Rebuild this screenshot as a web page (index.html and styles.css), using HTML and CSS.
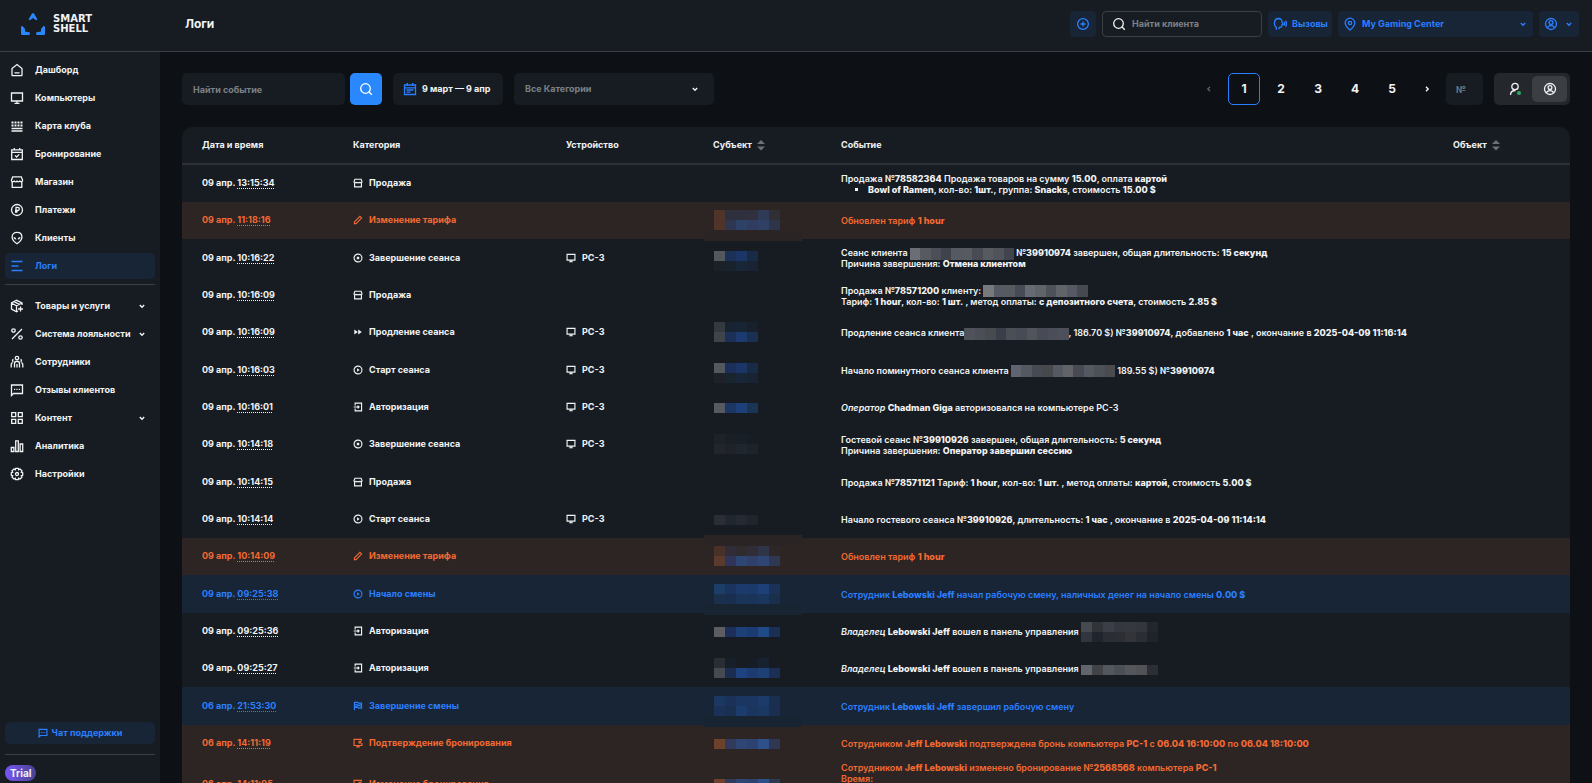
FILE: index.html
```html
<!DOCTYPE html>
<html lang="ru">
<head>
    <meta charset="UTF-8">
    <meta name="viewport" content="width=device-width, initial-scale=1.0">
    <title>Логи</title>
    <link rel="stylesheet" href="styles.css">
</head>
<body>

    <!-- Общие иконки -->
    <svg class="sprite" aria-hidden="true">
        <symbol id="i-home" viewBox="0 0 14 14"><path d="M2 5.6 7 1.6l5 4V12a.6.6 0 0 1-.6.6H2.6A.6.6 0 0 1 2 12zM4.5 9.8h5"/></symbol>
        <symbol id="i-pc" viewBox="0 0 14 14"><path d="M1.5 2h11v8h-11zM7 10v2M4.5 12.3h5"/></symbol>
        <symbol id="i-map" viewBox="0 0 14 14"><path d="M1.500 3.500h11M1.500 6.500h11" stroke-width="1.800" stroke-dasharray="2 1"/><path d="M1.500 9.500h11M1.500 12h11"/></symbol>
        <symbol id="i-booking" viewBox="0 0 14 14"><path d="M1.7 2.8h10.6v9.7H1.7zM1.7 5.3h10.6M4.3 1v2.5M9.7 1v2.5M5 8.4l1.6 1.6 2.6-2.6"/></symbol>
        <symbol id="i-shop" viewBox="0 0 14 14"><path d="M2.7 1.8h8.6l1.3 3.4c0 2-2.6 2-2.8.3-.2 1.7-2.7 1.7-2.8 0-.1 1.700-2.600 1.700-2.800 0C4 7.200 1.400 7.200 1.400 5.200zM2.200 7v5.400h9.600V7"/></symbol>
        <symbol id="i-pay" viewBox="0 0 14 14"><circle cx="7" cy="7" r="5.5"/><path d="M6 10V4.300h1.700a1.500 1.500 0 0 1 0 3.200H5M5 8.800h2.600"/></symbol>
        <symbol id="i-alien" viewBox="0 0 14 14"><path d="M7 1.300c-3 0-4.900 1.900-4.900 4.700 0 3 2.500 5.200 4.900 6.700 2.400-1.500 4.900-3.700 4.900-6.700C11.900 3.200 10 1.300 7 1.300z"/><path d="M3.600 6c1.700 0 2.700 1 2.700 2.500C4.500 8.600 3.600 7.600 3.600 6zM10.400 6c-1.700 0-2.700 1-2.700 2.500 1.800.1 2.700-.9 2.700-2.500z" fill="currentColor" stroke="none"/></symbol>
        <symbol id="i-logs" viewBox="0 0 14 14"><path d="M1.500 2.500h11M1.500 7h7M1.500 11.500h11"/></symbol>
        <symbol id="i-box" viewBox="0 0 14 14"><path d="M12 6V4L6.500 1.300 1.500 4v6l5 2.700 1.500-.7M1.500 4l5 2.700L12 4M6.500 6.700v6M4 2.600l5.200 2.700M10.500 7.500v5M8 10h5"/></symbol>
        <symbol id="i-percent" viewBox="0 0 14 14"><path d="M12 2 2 12"/><circle cx="3.500" cy="3.500" r="1.700"/><circle cx="10.500" cy="10.500" r="1.700"/></symbol>
        <symbol id="i-staff" viewBox="0 0 14 14"><circle cx="7" cy="3" r="1.700"/><path d="M4.500 12.500V8.500C4.500 5.500 9.500 5.500 9.500 8.500v4M7 9v3.500M3.500 4.500a1 1 0 1 0 0 2M1.200 12.500V9.500c0-1 .6-1.600 1.500-1.800M10.500 4.500a1 1 0 1 1 0 2M12.800 12.500V9.500c0-1-.6-1.600-1.500-1.800"/></symbol>
        <symbol id="i-chat" viewBox="0 0 14 14"><path d="M1.500 2h11v8.500h-9l-2 2zM4 6.300h1.200M6.400 6.300h1.200M8.800 6.300H10"/></symbol>
        <symbol id="i-grid" viewBox="0 0 14 14"><path d="M1.700 1.700h4v4h-4zM8.300 1.700h4v4h-4zM1.700 8.300h4v4h-4zM8.300 8.300h4v4h-4z"/></symbol>
        <symbol id="i-chart" viewBox="0 0 14 14"><path d="M1.300 8.500h2.600v4H1.300zM5.700 1.800h2.600v10.700H5.700zM10.100 5h2.600v7.500h-2.600z"/></symbol>
        <symbol id="i-gear" viewBox="0 0 14 14"><path d="M5.700 1.300h2.600l.4 1.400 1.400-.7L12 3.900l-.7 1.400 1.400.4v2.600l-1.400.4.700 1.400-1.900 1.900-1.400-.7-.4 1.400H5.700l-.4-1.400-1.400.7L2 10.100l.7-1.400-1.400-.4V5.700l1.400-.4L2 3.900 3.900 2l1.400.7z"/><circle cx="7" cy="7" r="1.500"/></symbol>
        <symbol id="i-down" viewBox="0 0 10 10"><path d="M2.800 4 5 6.200 7.200 4"/></symbol>
        <symbol id="i-search" viewBox="0 0 14 14"><circle cx="6.500" cy="6.500" r="4.800"/><path d="m10 10 2.800 2.800"/></symbol>
        <symbol id="i-plus" viewBox="0 0 14 14"><circle cx="7" cy="7" r="5.400"/><path d="M7 4.500v5M4.500 7h5"/></symbol>
        <symbol id="i-call" viewBox="0 0 14 14"><path d="M3.300 12.700v-2.500C.5 8.500.6 1.800 5.300 1.500c3 0 3.800 2 3.700 3.500l1 2.200-1 .5c.1 2-.7 2.500-2.200 2.500l-1.300 2M11 4.700c.7 1.300.7 2.800 0 4M12.700 3.700c1 2 1 4 0 6"/></symbol>
        <symbol id="i-pin" viewBox="0 0 14 14"><path d="M7 13C4 10.500 2.200 8.500 2.200 6a4.800 4.800 0 0 1 9.600 0c0 2.500-1.800 4.500-4.800 7z"/><circle cx="7" cy="6" r="1.700"/></symbol>
        <symbol id="i-user" viewBox="0 0 14 14"><circle cx="7" cy="7" r="5.500"/><circle cx="7" cy="5.500" r="1.900"/><path d="M3.500 11c.5-3.200 6.500-3.200 7 0"/></symbol>
        <symbol id="i-calendar" viewBox="0 0 14 14"><path d="M1.500 3h11v9.500h-11zM1.500 5.800h11M4.300 1v3M9.700 1v3M3.500 8h7M3.500 10.200h4"/></symbol>
        <symbol id="i-play" viewBox="0 0 14 14"><circle cx="7" cy="7" r="5.500"/><path d="M5.700 4.700 9.300 7 5.700 9.300z" fill="currentColor" stroke="none"/></symbol>
        <symbol id="i-stop" viewBox="0 0 14 14"><circle cx="7" cy="7" r="5.500"/><path d="M5.300 5.300h3.400v3.400H5.300z" fill="currentColor" stroke="none"/></symbol>
        <symbol id="i-forward" viewBox="0 0 14 14"><path d="M1.800 3.500 6.800 7l-5 3.500zM7.300 3.500l5 3.500-5 3.500z" fill="currentColor" stroke="none"/></symbol>
        <symbol id="i-login" viewBox="0 0 14 14"><path d="M3 4.800V1.500h9v11H3V9.200M1 7h7.500M6.500 5l2 2-2 2"/></symbol>
        <symbol id="i-edit" viewBox="0 0 14 14"><path d="M2 12v-2.300l7.700-7.700L12 4.300 4.300 12z"/></symbol>
        <symbol id="i-flag" viewBox="0 0 14 14"><path d="M2 13V2h4.500l1 1H12v7H8L7 9H2M3 4.500l9 3M3 7.500 12 5"/></symbol>
        <symbol id="i-reserve" viewBox="0 0 14 14"><path d="M12.500 7v3.500h-11V2h11M7 10.500v2M4.500 12.500h5M8.500 7l3.500-3.500M8.500 4v3h3"/></symbol>
        <symbol id="i-sort" viewBox="0 0 8 12"><path d="M0 5 4 1l4 4zM0 7.500 4 11.500l4-4z" fill="currentColor" stroke="none"/></symbol>
    </svg>

    <header class="header">
        <a href="#" class="logo" aria-label="Smart Shell">
            <svg class="logo-mark" viewBox="0 0 24 22"><path d="M7.500 6.500 11 .5q1-1 2 0l3.500 6-1.500.8-3-2.300-3 2.300zM0 13.500l1.500-.5L4 16v2.500l5 1L8.500 22H1.500Q0 22 0 20.500zM24 13.500l-1.500-.5L20 16v2.500l-5 1 .5 2.500h7q1.500 0 1.500-1.500z"/></svg>
            <span class="logo-text">SMART<br>SHELL</span>
        </a>
        <h1 class="title">Логи</h1>
        <div class="header-tools">
            <button class="tool tool-add" aria-label="Добавить"><svg class="icon"><use href="#i-plus"/></svg></button>
            <label class="client-search">
                <svg class="icon"><use href="#i-search"/></svg>
                <input type="text" placeholder="Найти клиента" aria-label="Найти клиента">
            </label>
            <button class="tool tool-calls"><svg class="icon"><use href="#i-call"/></svg>Вызовы</button>
            <button class="tool tool-center"><svg class="icon"><use href="#i-pin"/></svg>My Gaming Center<svg class="arrow"><use href="#i-down"/></svg></button>
            <button class="tool tool-user" aria-label="Профиль"><svg class="icon"><use href="#i-user"/></svg><svg class="arrow"><use href="#i-down"/></svg></button>
        </div>
    </header>

    <div class="layout">
        <aside class="sidebar">
            <nav class="nav">
                <a href="#"><svg class="icon"><use href="#i-home"/></svg>Дашборд</a>
                <a href="#"><svg class="icon"><use href="#i-pc"/></svg>Компьютеры</a>
                <a href="#"><svg class="icon"><use href="#i-map"/></svg>Карта клуба</a>
                <a href="#"><svg class="icon"><use href="#i-booking"/></svg>Бронирование</a>
                <a href="#"><svg class="icon"><use href="#i-shop"/></svg>Магазин</a>
                <a href="#"><svg class="icon"><use href="#i-pay"/></svg>Платежи</a>
                <a href="#"><svg class="icon"><use href="#i-alien"/></svg>Клиенты</a>
                <a href="#" class="active"><svg class="icon"><use href="#i-logs"/></svg>Логи</a>
            </nav>
            <nav class="nav nav-more">
                <a href="#"><svg class="icon"><use href="#i-box"/></svg>Товары и услуги<svg class="arrow"><use href="#i-down"/></svg></a>
                <a href="#"><svg class="icon"><use href="#i-percent"/></svg>Система лояльности<svg class="arrow"><use href="#i-down"/></svg></a>
                <a href="#"><svg class="icon"><use href="#i-staff"/></svg>Сотрудники</a>
                <a href="#"><svg class="icon"><use href="#i-chat"/></svg>Отзывы клиентов</a>
                <a href="#"><svg class="icon"><use href="#i-grid"/></svg>Контент<svg class="arrow"><use href="#i-down"/></svg></a>
                <a href="#"><svg class="icon"><use href="#i-chart"/></svg>Аналитика</a>
                <a href="#"><svg class="icon"><use href="#i-gear"/></svg>Настройки</a>
            </nav>
            <div class="sidebar-bottom">
                <button class="support"><svg class="icon icon-sm"><use href="#i-chat"/></svg>Чат поддержки</button>
                <div class="plan"><span class="badge">Trial</span></div>
            </div>
        </aside>

        <main class="main">
            <div class="toolbar">
                <input type="text" class="field event-search" placeholder="Найти событие" aria-label="Найти событие">
                <button class="search-button" aria-label="Искать"><svg class="icon"><use href="#i-search"/></svg></button>
                <button class="field date-range"><svg class="icon"><use href="#i-calendar"/></svg>9 март — 9 апр</button>
                <div class="select-wrap">
                    <select class="field category-select" aria-label="Категория">
                        <option>Все Категории</option>
                    </select>
                    <svg class="arrow"><use href="#i-down"/></svg>
                </div>

                <div class="pagination">
                    <button class="page-step" aria-label="Назад" disabled><svg class="arrow arrow-prev"><use href="#i-down"/></svg></button>
                    <button class="page current">1</button>
                    <button class="page">2</button>
                    <button class="page">3</button>
                    <button class="page">4</button>
                    <button class="page">5</button>
                    <button class="page-step" aria-label="Вперед"><svg class="arrow arrow-next"><use href="#i-down"/></svg></button>
                    <input type="text" class="field page-number" placeholder="№" aria-label="Номер страницы">
                </div>
                <div class="switch">
                    <button aria-label="Клиенты"><svg class="icon" viewBox="0 0 14 14"><circle cx="7" cy="4.500" r="3.200"/><path d="M2.500 13c0-3 2-4.500 5-4.500"/><circle class="online" cx="11" cy="11" r="2"/></svg></button>
                    <button class="on" aria-label="Сотрудники"><svg class="icon"><use href="#i-user"/></svg></button>
                </div>
            </div>

            <table class="logs">
                <colgroup>
                    <col class="col-date">
                    <col class="col-category">
                    <col class="col-device">
                    <col class="col-subject">
                    <col>
                    <col class="col-object">
                </colgroup>
                <thead>
                    <tr>
                        <th>Дата и время</th>
                        <th>Категория</th>
                        <th>Устройство</th>
                        <th>Субъект<svg class="sort"><use href="#i-sort"/></svg></th>
                        <th>Событие</th>
                        <th>Объект<svg class="sort"><use href="#i-sort"/></svg></th>
                    </tr>
                </thead>
                <tbody>
                    <tr>
                        <td>09 апр. <span class="time">13:15:34</span></td>
                        <td><svg class="icon icon-sm"><use href="#i-shop"/></svg>Продажа</td>
                        <td></td>
                        <td></td>
                        <td class="event">Продажа <b>№78582364</b> Продажа товаров на сумму <b>15.00</b>, оплата <b>картой</b>
                            <ul><li><b>Bowl of Ramen</b>, кол-во: <b>1шт.</b>, группа: <b>Snacks</b>, стоимость <b>15.00 $</b></li></ul></td>
                        <td></td>
                    </tr>
                    <tr class="orange">
                        <td>09 апр. <span class="time">11:18:16</span></td>
                        <td><svg class="icon icon-sm"><use href="#i-edit"/></svg>Изменение тарифа</td>
                        <td></td>
                        <td><span class="mask spill-down" data-cells="#50342a #2f303d #2f303d #30303f #2f3a57 #302f35,#50342a #2e3750 #2e4167 #303d60 #2f4065 #2f3549"></span></td>
                        <td class="event">Обновлен тариф <b>1 hour</b></td>
                        <td></td>
                    </tr>
                    <tr>
                        <td>09 апр. <span class="time">10:16:22</span></td>
                        <td><svg class="icon icon-sm"><use href="#i-stop"/></svg>Завершение сеанса</td>
                        <td><svg class="icon icon-sm"><use href="#i-pc"/></svg>PC-3</td>
                        <td><span class="mask low" data-cells="#53575e #1b3158 #1c3567 #182b45,#1b2127 #18222e #192637 #192333"></span></td>
                        <td class="event">Сеанс клиента <span class="mask name" data-cells="#6b6f75 #575a5e #4c4f57 #3f434b #565a60 #575b61 #484b54 #575b5f #50545a #41444d"></span> <b>№39910974</b> завершен, общая длительность: <b>15 секунд</b><br>Причина завершения: <b>Отмена клиентом</b></td>
                        <td></td>
                    </tr>
                    <tr>
                        <td>09 апр. <span class="time">10:16:09</span></td>
                        <td><svg class="icon icon-sm"><use href="#i-shop"/></svg>Продажа</td>
                        <td></td>
                        <td></td>
                        <td class="event">Продажа <b>№78571200</b> клиенту: <span class="mask name" data-cells="#77797d #565a65 #575a5e #474b55 #666a73 #606469 #4d5159 #606469 #555966 #464950"></span><br>Тариф: <b>1 hour</b>, кол-во: <b>1 шт.</b> , метод оплаты: <b>с депозитного счета</b>, стоимость <b>2.85 $</b></td>
                        <td></td>
                    </tr>
                    <tr>
                        <td>09 апр. <span class="time">10:16:09</span></td>
                        <td><svg class="icon icon-sm"><use href="#i-forward"/></svg>Продление сеанса</td>
                        <td><svg class="icon icon-sm"><use href="#i-pc"/></svg>PC-3</td>
                        <td><span class="mask" data-cells="#34383f #172331 #172433 #18202c,#3f434b #1b3057 #1d3a70 #1a3052"></span></td>
                        <td class="event">Продление сеанса клиента<span class="mask name" data-cells="#4f525a #4b4e56 #474a4e #3a3e48 #4b4e54 #474b55 #51545a #484b54 #4b4e59 #4d505a"></span>, 186.70 $) <b>№39910974</b>, добавлено <b>1 час</b> , окончание в <b>2025-04-09 11:16:14</b></td>
                        <td></td>
                    </tr>
                    <tr>
                        <td>09 апр. <span class="time">10:16:03</span></td>
                        <td><svg class="icon icon-sm"><use href="#i-play"/></svg>Старт сеанса</td>
                        <td><svg class="icon icon-sm"><use href="#i-pc"/></svg>PC-3</td>
                        <td><span class="mask low" data-cells="#53575e #1b2f5a #1c3567 #182b45,#1e2228 #18242e #192637 #192433"></span></td>
                        <td class="event">Начало поминутного сеанса клиента <span class="mask name" data-cells="#606370 #55585f #464b53 #47484c #545962 #626367 #474a53 #545961 #4c5057 #4a4b4f"></span> 189.55 $) <b>№39910974</b></td>
                        <td></td>
                    </tr>
                    <tr>
                        <td>09 апр. <span class="time">10:16:01</span></td>
                        <td><svg class="icon icon-sm"><use href="#i-login"/></svg>Авторизация</td>
                        <td><svg class="icon icon-sm"><use href="#i-pc"/></svg>PC-3</td>
                        <td><span class="mask" data-cells="#575a60 #1d3765 #1e4079 #1c3454"></span></td>
                        <td class="event"><i>Оператор</i> <b>Chadman Giga</b> авторизовался на компьютере PC-3</td>
                        <td></td>
                    </tr>
                    <tr>
                        <td>09 апр. <span class="time">10:14:18</span></td>
                        <td><svg class="icon icon-sm"><use href="#i-stop"/></svg>Завершение сеанса</td>
                        <td><svg class="icon icon-sm"><use href="#i-pc"/></svg>PC-3</td>
                        <td><span class="mask" data-cells="#1d2128 #1a1f26 #191f26 #171d23,#22252c #1f222a #20262d #1e232a"></span></td>
                        <td class="event">Гостевой сеанс <b>№39910926</b> завершен, общая длительность: <b>5 секунд</b><br>Причина завершения: <b>Оператор завершил сессию</b></td>
                        <td></td>
                    </tr>
                    <tr>
                        <td>09 апр. <span class="time">10:14:15</span></td>
                        <td><svg class="icon icon-sm"><use href="#i-shop"/></svg>Продажа</td>
                        <td></td>
                        <td></td>
                        <td class="event">Продажа <b>№78571121</b> Тариф: <b>1 hour</b>, кол-во: <b>1 шт.</b> , метод оплаты: <b>картой</b>, стоимость <b>5.00 $</b></td>
                        <td></td>
                    </tr>
                    <tr>
                        <td>09 апр. <span class="time">10:14:14</span></td>
                        <td><svg class="icon icon-sm"><use href="#i-play"/></svg>Старт сеанса</td>
                        <td><svg class="icon icon-sm"><use href="#i-pc"/></svg>PC-3</td>
                        <td><span class="mask" data-cells="#2a2d35 #20272e #252a32 #20242c"></span></td>
                        <td class="event">Начало гостевого сеанса <b>№39910926</b>, длительность: <b>1 час</b> , окончание в <b>2025-04-09 11:14:14</b></td>
                        <td></td>
                    </tr>
                    <tr class="orange">
                        <td>09 апр. <span class="time">10:14:09</span></td>
                        <td><svg class="icon icon-sm"><use href="#i-edit"/></svg>Изменение тарифа</td>
                        <td></td>
                        <td><span class="mask spill-up" data-cells="#4a3128 #302d38 #302b2d #302d38 #2f3448 #2d2827,#5a3a2c #2e3558 #2e4673 #30406b #2f4675 #2f3853"></span></td>
                        <td class="event">Обновлен тариф <b>1 hour</b></td>
                        <td></td>
                    </tr>
                    <tr class="blue">
                        <td>09 апр. <span class="time">09:25:38</span></td>
                        <td><svg class="icon icon-sm"><use href="#i-play"/></svg>Начало смены</td>
                        <td></td>
                        <td><span class="mask spill-down" data-cells="#1b3d68 #1b335f #1c3a6b #1b3a6a #1d4078 #1b3157,#1a304d #1a2f50 #1a3558 #1a3358 #1b365e #1a2f4c"></span></td>
                        <td class="event">Сотрудник <b>Lebowski Jeff</b> начал рабочую смену, наличных денег на начало смены <b>0.00 $</b></td>
                        <td></td>
                    </tr>
                    <tr>
                        <td>09 апр. <span class="time">09:25:36</span></td>
                        <td><svg class="icon icon-sm"><use href="#i-login"/></svg>Авторизация</td>
                        <td></td>
                        <td><span class="mask" data-cells="#5c5e62 #1b2f5a #1e4079 #1d3b73 #1f4a86 #1b2f54"></span></td>
                        <td class="event"><i>Владелец</i> <b>Lebowski Jeff</b> вошел в панель управления <span class="mask" data-cells="#454a50 #303338 #3b3e46 #34373e #35383e #33363c #23272d,#31353d #20242c #2a2d34 #2b2e34 #323439 #2a2d34 #1f232a"></span></td>
                        <td></td>
                    </tr>
                    <tr>
                        <td>09 апр. <span class="time">09:25:27</span></td>
                        <td><svg class="icon icon-sm"><use href="#i-login"/></svg>Авторизация</td>
                        <td></td>
                        <td><span class="mask" data-cells="#292d34 #17202a #161c22 #171d27 #17212f #161c22,#454951 #1b2e52 #1e4280 #1d3b70 #1e4077 #1b2f54"></span></td>
                        <td class="event"><i>Владелец</i> <b>Lebowski Jeff</b> вошел в панель управления <span class="mask" data-cells="#60666b #414347 #52565d #4a4e56 #54565a #515256 #2b2e35"></span></td>
                        <td></td>
                    </tr>
                    <tr class="blue">
                        <td>06 апр. <span class="time">21:53:30</span></td>
                        <td><svg class="icon icon-sm"><use href="#i-flag"/></svg>Завершение смены</td>
                        <td></td>
                        <td><span class="mask spill-down" data-cells="#1b3863 #1b3157 #1b3660 #1b3660 #1c3b6b #1a2f50,#1b3157 #1a3050 #1c3c6b #1b355f #1b3863 #1a2f50"></span></td>
                        <td class="event">Сотрудник <b>Lebowski Jeff</b> завершил рабочую смену</td>
                        <td></td>
                    </tr>
                    <tr class="orange">
                        <td>06 апр. <span class="time">14:11:19</span></td>
                        <td><svg class="icon icon-sm"><use href="#i-reserve"/></svg>Подтверждение бронирования</td>
                        <td></td>
                        <td><span class="mask" data-cells="#6e412c #2f3a5c #2f4674 #2e4270 #2d4f8a #2f3853"></span></td>
                        <td class="event">Сотрудником <b>Jeff Lebowski</b> подтверждена бронь компьютера <b>PC-1</b> с <b>06.04 16:10:00</b> по <b>06.04 18:10:00</b></td>
                        <td></td>
                    </tr>
                    <tr class="orange">
                        <td>06 апр. <span class="time">14:11:05</span></td>
                        <td><svg class="icon icon-sm"><use href="#i-reserve"/></svg>Изменение бронирования</td>
                        <td></td>
                        <td><span class="mask" data-cells="#6e412c #2f3a5c #2f4674 #2e4270 #2d4f8a #2f3853"></span></td>
                        <td class="event">Сотрудником <b>Jeff Lebowski</b> изменено бронирование <b>№2568568</b> компьютера <b>PC-1</b><br>Время:<br><br><br></td>
                        <td></td>
                    </tr>
                </tbody>
            </table>
        </main>
    </div>

    <script>
        // Рисует мозаику поверх скрытых имен
        document.querySelectorAll(".mask").forEach(function (mask) {
            mask.dataset.cells.split(",").forEach(function (line) {
                var row = document.createElement("span");
                row.className = "mask-row";
                line.split(" ").forEach(function (color) {
                    var cell = document.createElement("span");
                    cell.style.backgroundColor = color;
                    row.appendChild(cell);
                });
                mask.appendChild(row);
            });
        });
    </script>

</body>
</html>
```

FILE: styles.css
```css
* {
    box-sizing: border-box;
}

body {
    margin: 0;
    height: 100vh;
    display: flex;
    flex-direction: column;
    overflow: hidden;
    background-color: #0d1115;
    color: #f2f3f4;
    font-family: Inter, "Liberation Sans", sans-serif;
    font-size: 9px;
    font-weight: 700;
    line-height: 14px;
}

button,
input,
select {
    font: inherit;
    color: inherit;
    border: none;
    background: none;
    padding: 0;
    outline: none;
}

button {
    cursor: pointer;
}

a {
    color: inherit;
    text-decoration: none;
}

input::placeholder {
    color: #7d8085;
    opacity: 1;
}

.sprite {
    display: none;
}

.icon,
.arrow {
    width: 14px;
    height: 14px;
    flex: none;
    fill: none;
    stroke: currentColor;
    stroke-width: 1.3;
}

.icon-sm {
    width: 10px;
    height: 10px;
    stroke-width: 1.6;
}

.arrow {
    width: 10px;
    height: 10px;
    stroke-width: 1.4;
}

/* Шапка */
.header {
    display: flex;
    align-items: center;
    flex: none;
    height: 52px;
    padding: 0 13px 3px 21px;
    background-color: #161c22;
    border-bottom: 1px solid #3b3e44;
}

.logo {
    display: flex;
    align-items: center;
    gap: 8px;
    width: 164px;
}

.logo-mark {
    width: 24px;
    height: 22px;
    fill: #2a88ff;
}

.logo-text {
    font-family: "DejaVu Sans", sans-serif;
    font-size: 10px;
    line-height: 10px;
}

.title {
    margin: 0;
    font-size: 12px;
}

.header-tools {
    display: flex;
    gap: 6px;
    margin-left: auto;
}

.tool {
    display: flex;
    align-items: center;
    height: 26px;
    gap: 5px;
    padding: 0 5px;
    border-radius: 4px;
    background-color: #182536;
    color: #2a7fff;
    white-space: nowrap;
}

.tool .arrow {
    margin-left: auto;
}

.tool-add {
    width: 26px;
    padding: 0 6px;
}

.tool-calls {
    width: 64px;
}

.tool-center {
    width: 195px;
}

.tool-user {
    width: 40px;
    gap: 0;
}

.client-search {
    display: flex;
    align-items: center;
    gap: 6px;
    width: 160px;
    height: 26px;
    padding: 0 9px;
    border: 1px solid #3b3e44;
    border-radius: 4px;
}

.client-search input {
    width: 100%;
}

/* Боковое меню */
.layout {
    display: flex;
    flex: 1;
    min-height: 0;
}

.sidebar {
    display: flex;
    flex-direction: column;
    flex: none;
    width: 160px;
    padding: 5px 5px 0;
    background-color: #161c22;
}

.nav {
    display: flex;
    flex-direction: column;
    gap: 2px;
    padding-bottom: 5px;
}

.nav-more {
    padding-top: 8px;
    border-top: 1px solid #3b3e44;
}

.nav a {
    display: flex;
    align-items: center;
    height: 26px;
    padding: 0 8px 0 5px;
    border-radius: 5px;
    white-space: nowrap;
}

.nav .icon {
    margin-right: 11px;
}

.nav .arrow {
    margin-left: auto;
}

.nav .active {
    background-color: #182536;
    color: #2a7fff;
}

.sidebar-bottom {
    margin-top: auto;
}

.support {
    display: flex;
    align-items: center;
    justify-content: center;
    gap: 4px;
    width: 100%;
    height: 22px;
    border-radius: 5px;
    background-color: #182536;
    color: #2a7fff;
}

.plan {
    margin-top: 10px;
    padding: 10px 0 2px;
    border-top: 1px solid #3b3e44;
}

.badge {
    display: inline-block;
    padding: 1px 5px;
    border-radius: 8px;
    background: linear-gradient(90deg, #7657f5, #4a4391);
    font-size: 10px;
}

/* Панель фильтров */
.main {
    flex: 1;
    min-width: 0;
    padding: 21px 22px 0;
}

.toolbar {
    display: flex;
    margin-bottom: 22px;
}

.field {
    height: 32px;
    border-radius: 5px;
    background-color: #161c22;
}

.event-search {
    width: 163px;
    padding: 0 11px;
    margin-right: 5px;
}

.search-button {
    display: flex;
    align-items: center;
    justify-content: center;
    width: 32px;
    height: 32px;
    margin-right: 11px;
    border-radius: 5px;
    background-color: #2a88ff;
    color: #fff;
}

.date-range {
    display: flex;
    align-items: center;
    gap: 5px;
    width: 110px;
    padding: 0 10px;
    margin-right: 11px;
    white-space: nowrap;
}

.date-range .icon {
    color: #2a7fff;
}

.select-wrap {
    position: relative;
}

.category-select {
    width: 200px;
    padding: 0 11px;
    appearance: none;
    color: #7d8085;
}

.select-wrap .arrow {
    position: absolute;
    right: 14px;
    top: 11px;
    pointer-events: none;
}

.pagination {
    display: flex;
    gap: 5px;
    margin-left: auto;
}

.page,
.page-step {
    display: flex;
    align-items: center;
    justify-content: center;
    width: 32px;
    height: 32px;
    border-radius: 5px;
    font-size: 12px;
}

.page-step {
    width: 28px;
}

.page-step:disabled {
    color: #5a5d61;
}

.current {
    border: 1px solid #2a7fff;
}

.arrow-prev {
    transform: rotate(90deg);
}

.arrow-next {
    transform: rotate(-90deg);
}

.page-number {
    width: 37px;
    padding: 0 10px;
}

.switch {
    display: flex;
    width: 76px;
    height: 32px;
    margin-left: 11px;
    padding: 3px;
    border-radius: 5px;
    background-color: #24272c;
}

.switch button {
    display: flex;
    align-items: center;
    justify-content: center;
    flex: 1;
    border-radius: 5px;
}

.switch .on {
    background-color: #3b3e43;
}

.online {
    fill: #27ae60;
    stroke: none;
}

/* Таблица логов */
.logs {
    width: 100%;
    table-layout: fixed;
    border-collapse: separate;
    border-spacing: 0;
    border-radius: 10px 10px 0 0;
    background-color: #161c22;
}

.col-date {
    width: 151px;
}

.col-category {
    width: 213px;
}

.col-device {
    width: 147px;
}

.col-subject {
    width: 128px;
}

.col-object {
    width: 137px;
}

.logs th,
.logs td {
    padding: 0 0 0 20px;
    text-align: left;
    white-space: nowrap;
}

.logs th {
    height: 38px;
    border-bottom: 2px solid #2d3037;
}

.logs td {
    height: 37px;
    padding-bottom: 1px;
}

.logs tr:nth-child(3n) td {
    height: 38px;
}

.logs td .icon {
    margin-right: 6px;
    vertical-align: -2px;
}

.sort {
    width: 8px;
    height: 12px;
    margin-left: 5px;
    vertical-align: -3px;
    color: #6d7075;
}

.time {
    text-decoration: underline dotted 1px;
    text-underline-offset: 2px;
}

.logs .event {
    padding-bottom: 0;
    font-weight: 600;
    line-height: 11px;
}

.event b {
    font-weight: 800;
}

.event ul {
    margin: 0;
    padding-left: 27px;
    list-style: square;
}

.orange {
    background-color: #2d2523;
    color: #f26a33;
}

.blue {
    background-color: #182536;
    color: #2a7fff;
}

/* Мозаика */
.mask {
    display: inline-block;
    position: relative;
    vertical-align: middle;
    margin-left: 1px;
}

.mask-row {
    display: flex;
}

.mask-row span {
    width: 11px;
    height: 10px;
}

.event .mask {
    margin: -5px 0;
}

.name {
    width: 104px;
}

.name .mask-row span {
    flex: 1;
    height: 12px;
}

.low {
    margin-top: 6px;
}

.spill-down::after,
.spill-up::after {
    content: "";
    position: absolute;
    left: -10px;
    top: 100%;
    width: 98px;
    height: 11px;
    background-color: #2a2524;
}

.spill-up::after {
    top: -11px;
}

.blue .spill-down::after {
    background-color: #182431;
}
```
